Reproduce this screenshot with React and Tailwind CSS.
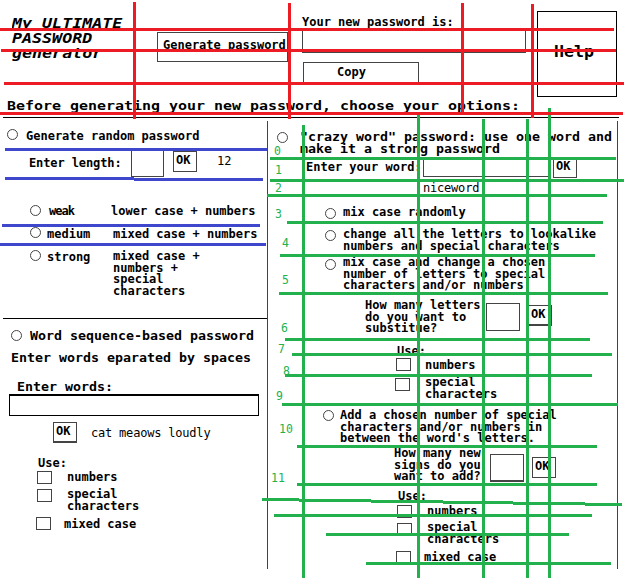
import React from 'react';

const RED = '#ed1c24';
const BLUE = '#3f48cc';
const GREEN = '#22b14c';

function Radio({ className = '' }) {
  return <span className={`h-[11px] w-[11px] shrink-0 rounded-full border border-[#444] bg-white ${className}`} />;
}

function Check({ className = '' }) {
  return <span className={`h-[13px] w-[15px] shrink-0 border border-[#444] bg-white ${className}`} />;
}

function Label({ className = '', children }) {
  return <span className={`shrink-0 whitespace-pre ${className}`}>{children}</span>;
}

function Wide({ className = '', children }) {
  return <span className={`shrink-0 origin-left scale-x-[1.107] whitespace-pre ${className}`}>{children}</span>;
}

function Ok({ className = '' }) {
  return (
    <button className={`flex h-[21px] w-6 shrink-0 items-start border border-[#444] bg-white pl-[2px] pt-[2px] leading-3 ${className}`}>
      OK
    </button>
  );
}

function Box({ className = '' }) {
  return <span className={`shrink-0 border border-[#444] bg-white ${className}`} />;
}

// [x1, x2, y]
const redRows = [[0, 614, 29.5], [1, 616, 50.5], [4, 624, 83.5], [0, 623, 113.5]];
const blueRows = [[5, 267, 149.5], [5, 134, 178.5], [134, 263, 179.5], [2, 260, 225.5], [0, 266, 244.5]];
const greenRows = [
  [270, 616, 158.5], [270, 624, 180.5], [267, 607, 195.5], [287, 603, 222.5], [280, 595, 255.5],
  [279, 608, 293.5], [285, 590, 339.5], [292, 612, 354.5], [285, 592, 375.5], [282, 618, 404.5],
  [297, 597, 446.5], [297, 597, 484.5], [262, 299, 499.5], [299, 371, 500.5], [371, 443, 501.5],
  [443, 513, 502.5], [513, 585, 503.5], [585, 622, 504.5], [274, 592, 515.5], [326, 569, 534.5], [366, 611, 563.5],
];
// [y1, y2, x]
const redCols = [[2, 119, 134.5], [3, 119, 289.5], [3, 113, 462.5], [4, 118, 532.5]];
const greenCols = [[125, 578, 303.5], [115, 578, 418.5], [119, 578, 483.5], [119, 578, 527.5], [108, 578, 549.5]];
const marks = [
  ['0', 274, 155], ['1', 275, 174], ['2', 275, 192], ['3', 275, 218], ['4', 282, 247], ['5', 282, 284],
  ['6', 281, 332], ['7', 278, 353], ['8', 283, 375], ['9', 276, 400], ['10', 279, 433], ['11', 271, 482],
];

function GridLines() {
  const row = (color) => ([a, b, y]) => <line key={`${a}-${y}`} x1={a} x2={b} y1={y} y2={y} stroke={color} strokeWidth="3" />;
  const col = (color) => ([a, b, x]) => <line key={x} x1={x} x2={x} y1={a} y2={b} stroke={color} strokeWidth="3" />;
  return (
    <svg className="pointer-events-none absolute left-0 top-0" width="624" height="578" viewBox="0 0 624 578">
      {greenCols.map(col(GREEN))}
      {greenRows.map(row(GREEN))}
      {blueRows.map(row(BLUE))}
      {redRows.map(row(RED))}
      {redCols.map(col(RED))}
      {marks.map(([t, x, y]) => (
        <text key={t} x={x} y={y} fill={GREEN} fontSize="11.5" fontWeight="400">{t}</text>
      ))}
    </svg>
  );
}

function Header() {
  return (
    <header className="flex h-[99px] items-start">
      <h1 className="ml-3 mt-4 w-[145px] shrink-0 text-[14px] italic leading-[15px]">
        <span className="block h-[15px] w-[100px] origin-left scale-x-[1.19] overflow-hidden whitespace-pre">My ULTIMATE</span>
        <span className="block h-[15px] w-[100px] origin-left scale-x-[1.19] whitespace-pre">PASSWORD</span>
        <span className="block h-[15px] w-[100px] origin-left scale-x-[1.19] whitespace-pre">generator</span>
      </h1>
      <button className="mt-8 flex h-[30px] w-[131px] shrink-0 items-start whitespace-pre border border-[#444] pl-[5px] pt-[6px] leading-3">
        Generate password
      </button>
      <div className="ml-[14px] mt-4 flex w-[235px] shrink-0 flex-col">
        <Label>Your new password is:</Label>
        <Box className="mt-[2px] h-[23px] w-[224px]" />
        <button className="ml-px mt-[9px] flex h-[22px] w-[116px] items-start border border-[#444] pl-[33px] pt-[3px] leading-3">
          Copy
        </button>
      </div>
      <button className="mt-[11px] flex h-[86px] w-20 items-start border border-black pl-4 pt-[32px] text-[15px] leading-4">
        <span className="origin-left scale-x-[1.11]">Help</span>
      </button>
    </header>
  );
}

function RandomPassword() {
  return (
    <section className="flex h-[198px] flex-col border-b border-black">
      <div className="flex h-[29px] items-start pl-1">
        <Radio className="mt-[8px]" />
        <Label className="ml-2 mt-[9px]">Generate random password</Label>
      </div>
      <div className="flex h-[54px] items-start pl-[26px]">
        <Label className="mt-[7px] w-[102px] tracking-[-0.1px]">Enter length:</Label>
        <Box className="h-[27px] w-[33px]" />
        <Ok className="ml-[9px] mt-px" />
        <Label className="ml-5 mt-[5px] font-normal">12</Label>
      </div>
      <div className="flex h-[22px] items-start pl-[27px]">
        <Radio className="mt-px" />
        <Label className="ml-2 mt-px w-[62px] tracking-[-1px]">weak</Label>
        <Label className="mt-px">lower case + numbers</Label>
      </div>
      <div className="flex h-[24px] items-start pl-[27px]">
        <Radio className="mt-px" />
        <Label className="ml-[6px] mt-[2px] w-[66px]">medium</Label>
        <Label className="mt-[2px]">mixed case + numbers</Label>
      </div>
      <div className="flex items-start pl-[27px]">
        <Radio />
        <Label className="ml-[6px] mt-px w-[66px]">strong</Label>
        <Label className="mt-px leading-[11.5px]">{'mixed case +\nnumbers +\nspecial\ncharacters'}</Label>
      </div>
    </section>
  );
}

function WordSequence() {
  return (
    <section className="flex flex-col">
      <div className="flex h-[33px] items-start pl-2">
        <Radio className="mt-[11px]" />
        <Wide className="ml-2 mt-[11px]">Word sequence-based password</Wide>
      </div>
      <div className="flex h-[29px] items-start pl-2">
        <Wide>Enter words eparated by spaces</Wide>
      </div>
      <div className="flex h-[13px] items-start pl-[14px]">
        <Wide>Enter words:</Wide>
      </div>
      <Box className="ml-[6px] h-[22px] w-[250px] border-t-2 !border-black" />
      <div className="flex h-[42px] items-start pl-[50px] pt-[6px]">
        <Ok className="border-b-2" />
        <Label className="ml-[14px] mt-[5px] font-normal tracking-[-0.2px]">cat meaows loudly</Label>
      </div>
      <div className="flex h-[13px] items-start pl-[35px]">
        <Label className="-mt-px">Use:</Label>
      </div>
      <div className="flex h-[18px] items-start pl-[34px]">
        <Check />
        <Label className="ml-[15px]">numbers</Label>
      </div>
      <div className="flex h-[28px] items-start pl-[34px]">
        <Check className="h-3" />
        <Label className="ml-[15px] mt-[-1px]">{'special\ncharacters'}</Label>
      </div>
      <div className="flex items-start pl-[33px]">
        <Check className="h-3" />
        <Label className="ml-[13px] mt-px">mixed case</Label>
      </div>
    </section>
  );
}

function CrazyWord() {
  return (
    <section className="flex flex-col">
      <div className="flex h-[36px] items-start pl-[9px]">
        <Radio className="mt-[11px]" />
        <Wide className="ml-3 mt-[10px]">{'"crazy word" password: use one word and\nmake it a strong password'}</Wide>
      </div>
      <div className="flex h-[25px] items-start pl-[38px]">
        <Label className="mt-1 w-[117px]">Enter your word:</Label>
        <Box className="h-[20px] w-[126px]" />
        <Ok className="ml-1 h-5" />
      </div>
      <div className="flex h-[24px] items-start pl-[155px]">
        <Label className="font-normal tracking-[-0.2px]">niceword</Label>
      </div>
      <div className="flex h-[23px] items-start pl-[57px]">
        <Radio className="mt-[2px]" />
        <Label className="ml-[7px]">mix case randomly</Label>
      </div>
      <div className="flex h-[28px] items-start pl-[57px]">
        <Radio className="mt-px" />
        <Label className="ml-[7px] leading-[11.5px]">{'change all the letters to lookalike\nnumbers and special characters'}</Label>
      </div>
      <div className="flex h-[43px] items-start pl-[57px]">
        <Radio className="mt-[2px]" />
        <Label className="ml-[7px] leading-[11.5px]">{'mix case and change a chosen\nnumber of letters to special\ncharacters and/or numbers'}</Label>
      </div>
      <div className="flex h-[45px] items-start pl-[97px]">
        <Label className="w-[121px] leading-[11.5px]">{'How many letters\ndo you want to\nsubstitue?'}</Label>
        <Box className="mt-[3px] h-[28px] w-[34px]" />
        <Ok className="ml-2 mt-[5px] border-b-2" />
      </div>
      <div className="flex h-[13px] items-start pl-[129px]">
        <Label>Use:</Label>
      </div>
      <div className="flex h-[18px] items-start pl-[128px]">
        <Check />
        <Label className="ml-[14px] mt-px">numbers</Label>
      </div>
      <div className="flex h-[33px] items-start pl-[127px]">
        <Check className="mt-[2px] h-3" />
        <Label className="ml-[15px] mt-px leading-[11.5px]">{'special\ncharacters'}</Label>
      </div>
      <div className="flex h-[39px] items-start pl-[55px]">
        <Radio className="mt-px" />
        <Label className="ml-[6px] mt-px leading-[11.5px]">{"Add a chosen number of special\ncharacters and/or numbers in\nbetween the word's letters."}</Label>
      </div>
      <div className="flex h-[42px] items-start pl-[126px]">
        <Label className="w-[96px] leading-[11.5px]">{'How many new\nsigns do you\nwant to add?'}</Label>
        <Box className="mt-[6px] h-[28px] w-[34px] border-b-2" />
        <Ok className="ml-2 mt-[9px] h-5" />
      </div>
      <div className="flex h-[15px] items-start pl-[130px]">
        <Label>Use:</Label>
      </div>
      <div className="flex h-[17px] items-start pl-[129px]">
        <Check />
        <Label className="ml-[15px]">numbers</Label>
      </div>
      <div className="flex h-[29px] items-start pl-[129px]">
        <Check className="mt-px" />
        <Label className="ml-[15px] leading-[11.5px]">{'special\ncharacters'}</Label>
      </div>
      <div className="flex items-start pl-[128px]">
        <Check />
        <Label className="ml-[13px]">mixed case</Label>
      </div>
    </section>
  );
}

export default function App() {
  return (
    <main className="relative flex h-[578px] w-[624px] flex-col overflow-hidden bg-white font-['DejaVu_Sans_Mono',monospace] text-[12px] font-bold leading-3 text-black">
      <Header />
      <h2 className="ml-[7px] h-[18px] w-[446px] origin-left scale-x-[1.15] whitespace-pre text-[13px] leading-[14px]">
        Before generating your new password, choose your options:
      </h2>
      <div className="ml-[3px] w-[616px] border-t border-black" />
      <div className="flex h-[451px] pl-[3px] pt-[3px]">
        <div className="flex w-[264px] shrink-0 flex-col">
          <RandomPassword />
          <WordSequence />
        </div>
        <div className="w-[351px] shrink-0 border-x border-[#444]">
          <CrazyWord />
        </div>
      </div>
      <GridLines />
    </main>
  );
}
